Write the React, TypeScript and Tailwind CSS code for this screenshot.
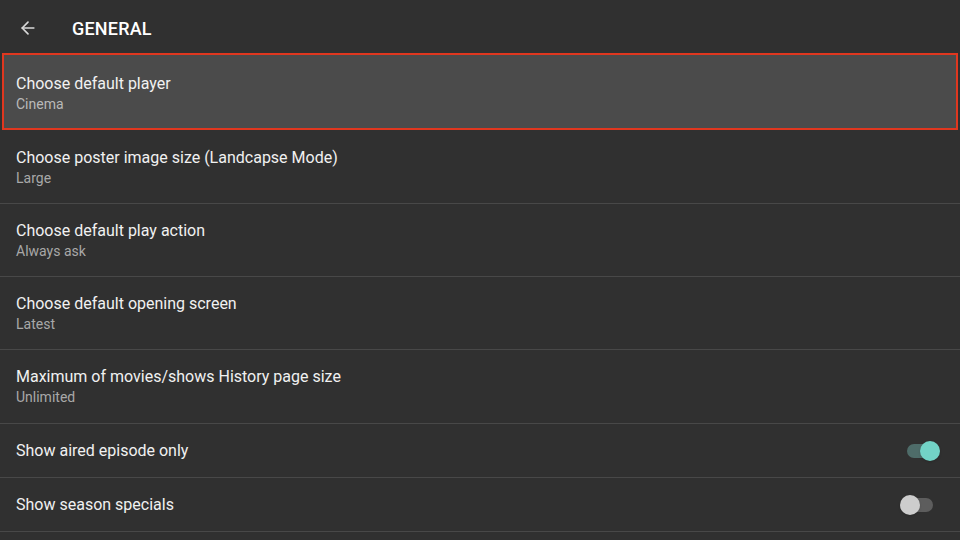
import { ArrowLeft } from "lucide-react";

const listItems = [
  { title: "Choose default player", value: "Cinema", active: true },
  { title: "Choose poster image size (Landcapse Mode)", value: "Large" },
  { title: "Choose default play action", value: "Always ask" },
  { title: "Choose default opening screen", value: "Latest" },
  { title: "Maximum of movies/shows History page size", value: "Unlimited", tall: true },
];

const toggles = [
  { title: "Show aired episode only", on: true },
  { title: "Show season specials", on: false },
];

const Toggle = ({ on }: { on: boolean }) => (
  <div className="relative w-[36px] h-[20px] flex items-center">
    <div
      className={`h-[14px] w-[30px] rounded-full ml-[3px] ${on ? "bg-[#4e6c69]" : "bg-[#5d5d5d]"}`}
    />
    <div
      className={`absolute top-0 w-[20px] h-[20px] rounded-full shadow ${
        on ? "right-0 bg-[#72d3c6]" : "left-0 bg-[#cdcdcd]"
      }`}
    />
  </div>
);

export default function App() {
  return (
    <div
      className="w-[960px] h-[540px] overflow-hidden bg-[#303030] text-[#f1f1f1]"
      style={{ fontFamily: "Roboto, 'Liberation Sans', sans-serif" }}
    >
      {/* HEADER */}
      <header className="h-[53px] flex items-center pt-[3px]">
        <ArrowLeft size={20} strokeWidth={2} className="ml-[18px] text-[#d8d8d8]" />
        <h1 className="ml-[34px] text-[18px] font-medium tracking-[0.2px] text-white">GENERAL</h1>
      </header>

      {/* LIST */}
      <div>
        {listItems.map((item) =>
          item.active ? (
            <div
              key={item.title}
              className="mx-[2px] mb-[1px] h-[77px] border-2 border-[#e0371f] bg-[#4b4b4b] flex flex-col justify-center pl-[12px] pt-[2px]"
            >
              <div className="text-[16px] leading-[20px] mt-[2px]">{item.title}</div>
              <div className="text-[14px] leading-[20px] text-[#b9b9b9]">{item.value}</div>
            </div>
          ) : (
            <div
              key={item.title}
              className={`${item.tall ? "h-[74px]" : "h-[73px]"} border-b border-[#484848] flex flex-col justify-center pl-[16px] pt-[1px]`}
            >
              <div className="text-[16px] leading-[20px]">{item.title}</div>
              <div className="text-[14px] leading-[20px] text-[#a8a8a8]">{item.value}</div>
            </div>
          )
        )}
        {toggles.map((t) => (
          <div
            key={t.title}
            className={`h-[54px] border-b border-[#484848] flex items-center justify-between pl-[16px] ${
              t.on ? "pr-[20px]" : "pr-[24px]"
            }`}
          >
            <span className="text-[16px]">{t.title}</span>
            <Toggle on={t.on} />
          </div>
        ))}
      </div>
    </div>
  );
}
